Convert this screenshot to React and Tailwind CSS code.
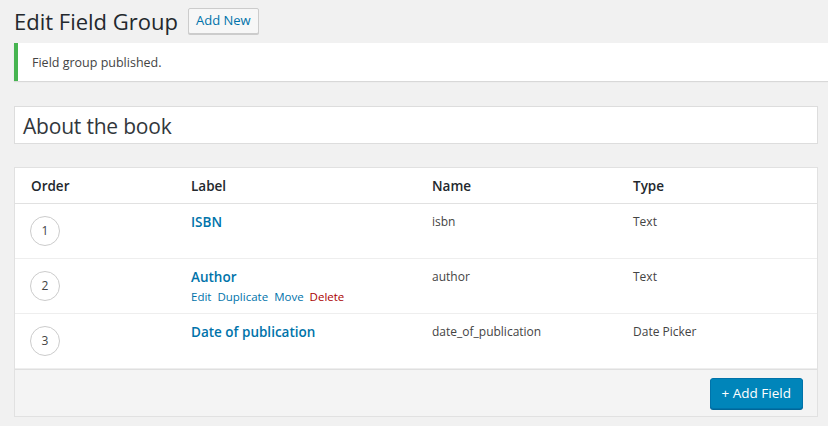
import React from 'react';

const fields = [
  { order: 1, label: 'ISBN', name: 'isbn', type: 'Text' },
  { order: 2, label: 'Author', name: 'author', type: 'Text', actions: true },
  { order: 3, label: 'Date of publication', name: 'date_of_publication', type: 'Date Picker' },
];

const cols = 'grid grid-cols-[160px_241px_201px_1fr] pl-4';

const App = () => {
  return (
    <div className="min-h-[426px] bg-[#f1f1f1] font-['Open_Sans','Noto_Sans',sans-serif] text-[#23282d] overflow-hidden">
      <div className="flex items-center gap-2 pl-[14px] pt-[7px] h-[34px]">
        <h1 className="text-[22px] leading-none">Edit Field Group</h1>
        <button className="ml-[2px] h-[26px] px-[7px] text-[13px] text-[#0073aa] bg-[#f7f7f7] border border-[#cccccc] rounded-[2px] shadow-[0_1px_0_#ccc]">
          Add New
        </button>
      </div>

      <div className="ml-[14px] mt-[9px] h-[38px] flex items-center bg-white border-l-4 border-[#46b450] pl-[14px] pt-[3px] shadow-[0_1px_1px_rgba(0,0,0,0.1)]">
        <p className="text-[12.5px] text-[#444]">Field group published.</p>
      </div>

      <div className="mx-[10px] ml-[14px] mt-[25px] h-[38px] bg-white border border-[#dddddd] flex items-center pl-2 pt-[3px]">
        <span className="text-[21px] text-[#32373c] tracking-[-0.2px]">About the book</span>
      </div>

      <div className="ml-[14px] mr-[10px] mt-[23px] bg-white border border-[#e1e1e1]">
        <div className={`${cols} h-[36px] items-center pt-[2px] border-b border-[#e1e1e1] text-[13.5px] font-semibold text-[#23282d]`}>
          <div>Order</div>
          <div>Label</div>
          <div>Name</div>
          <div>Type</div>
        </div>
        {fields.map(f => (
          <div key={f.order} className={`${cols} h-[55px] border-b border-[#eeeeee] last:border-b-0`}>
            <div className="pt-[12px]">
              <div className="w-[30px] h-[30px] -ml-px rounded-full border border-[#cccccc] flex items-center justify-center text-[12px] text-[#444]">
                {f.order}
              </div>
            </div>
            <div className="pt-[7px]">
              <div className="text-[13.5px] font-semibold text-[#0073aa] leading-[22px]">{f.label}</div>
              {f.actions && (
                <div className="flex gap-[6px] text-[11.5px] leading-[18px] text-[#0073aa]">
                  <span>Edit</span>
                  <span>Duplicate</span>
                  <span>Move</span>
                  <span className="text-[#a00]">Delete</span>
                </div>
              )}
            </div>
            <div className="pt-[10px] text-[12px] text-[#444] leading-[16px]">{f.name}</div>
            <div className="pt-[10px] text-[12px] text-[#444] leading-[16px]">{f.type}</div>
          </div>
        ))}
        <div className="h-[47px] bg-[#f4f4f4] border-t border-[#dfdfdf] flex items-start justify-end pr-[14px] pt-[8px]">
          <button className="h-[31px] px-[11px] bg-[#0085ba] border border-[#0073aa] rounded-[3px] text-white text-[13.5px] shadow-[0_1px_0_#006799]">
            + Add Field
          </button>
        </div>
      </div>
    </div>
  );
};

export default App;
